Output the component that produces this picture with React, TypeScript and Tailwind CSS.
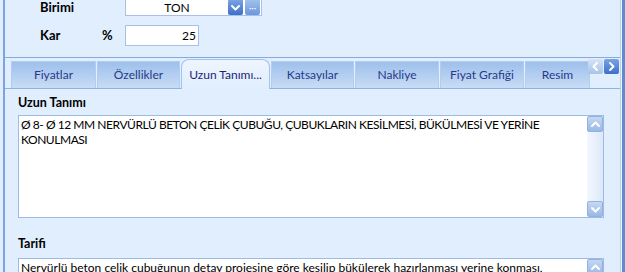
import React from 'react';

const tabs = [
  { label: 'Fiyatlar', w: 'w-[85px]' },
  { label: 'Özellikler', w: 'w-[83px]' },
  { label: 'Uzun Tanımı...', w: 'w-[89px]', active: true },
  { label: 'Katsayılar', w: 'w-[83px]' },
  { label: 'Nakliye', w: 'w-[84px]' },
  { label: 'Fiyat Grafiği', w: 'w-[84px]' },
  { label: 'Resim', w: 'w-[65px]' },
];

function Chevron({ dir, className }: { dir: 'up' | 'down' | 'left' | 'right'; className?: string }) {
  const d = {
    up: 'M2 7 L5.5 3.5 L9 7',
    down: 'M2 4 L5.5 7.5 L9 4',
    left: 'M7 2 L3.5 5.5 L7 9',
    right: 'M4 2 L7.5 5.5 L4 9',
  }[dir];
  return (
    <svg width="11" height="11" viewBox="0 0 11 11" className={className}>
      <path d={d} fill="none" stroke="currentColor" strokeWidth="2" strokeLinecap="round" strokeLinejoin="round" />
    </svg>
  );
}

function ScrollBar({ short }: { short?: boolean }) {
  return (
    <div className="w-[16px] h-full flex flex-col bg-gradient-to-r from-[#f4f8fe] to-[#dce8f8]">
      <div className="h-[16px] shrink-0 rounded-[2px] bg-gradient-to-b from-[#c6d8f3] to-[#9ab8e7] border border-[#93b1e0] flex items-center justify-center text-white">
        <Chevron dir="up" />
      </div>
      {!short && <div className="flex-1" />}
      {!short && (
        <div className="h-[16px] shrink-0 rounded-[2px] bg-gradient-to-b from-[#c6d8f3] to-[#9ab8e7] border border-[#93b1e0] flex items-center justify-center text-white">
          <Chevron dir="down" />
        </div>
      )}
    </div>
  );
}

export default function App() {
  return (
    <div className="w-[625px] h-[272px] overflow-hidden flex bg-[#e0eefd] font-['Lato',sans-serif] text-black">
      <div className="w-[3px] shrink-0 bg-[#e0eefd]" />
      <div className="w-[2px] shrink-0 bg-[#7fa3da]" />

      <div className="flex-1 flex flex-col min-w-0">
        {/* header fields */}
        <div className="h-[58px] shrink-0 border-b border-[#86aae0] pl-[35px] flex flex-col">
          <div className="flex items-center -mt-[3px] h-[19px]">
            <span className="w-[85px] text-[13px] leading-[13px] font-bold mt-[2px]">Birimi</span>
            <div className="w-[137px] h-[19px] bg-white border border-[#a6c0e6] flex items-center">
              <span className="flex-1 text-center text-[12px] leading-[12px] mt-[2px]">TON</span>
              <div className="w-[15px] h-[16px] mt-[1px] rounded-[2px] bg-gradient-to-b from-[#7da6e6] to-[#3e6ec8] flex items-center justify-center text-white">
                <Chevron dir="down" />
              </div>
              <div className="w-[15px] h-[16px] mt-[1px] ml-[2px] mr-[1px] rounded-[2px] bg-gradient-to-b from-[#a5c2ee] to-[#6c97dc] flex items-center justify-center text-white text-[9px] leading-none">
                ···
              </div>
            </div>
          </div>
          <div className="flex items-center mt-[9px] h-[21px]">
            <span className="w-[62px] text-[13px] font-bold">Kar</span>
            <span className="w-[23px] text-[13px] font-bold">%</span>
            <div className="w-[74px] h-[21px] bg-white border border-[#a6c0e6] flex items-center justify-end pr-[2px] text-[12px]">
              25
            </div>
          </div>
        </div>

        {/* tab strip */}
        <div className="h-[31px] shrink-0 border-b border-[#8fb2e6] flex items-end pl-[6px] gap-[1px] relative">
          {tabs.map((t) =>
            t.active ? (
              <div
                key={t.label}
                className={`${t.w} h-[30px] -mb-[1px] rounded-t-[8px] border border-b-0 border-[#a3c2ec] bg-gradient-to-b from-[#eef5fe] to-[#e0eefd] flex items-center justify-center text-[12px] text-[#221f7a]`}
              >
                {t.label}
              </div>
            ) : (
              <div
                key={t.label}
                className={`${t.w} h-[27px] border border-b-0 border-[#b3cdf0] bg-gradient-to-b from-[#9ec0ec] to-[#c8dcf5] flex items-center justify-center text-[12px] text-[#263a8a]`}
              >
                {t.label}
              </div>
            )
          )}
          <div className="absolute right-[1px] top-[1px] flex gap-[1px]">
            <div className="w-[15px] h-[15px] rounded-[2px] bg-gradient-to-b from-[#d5e3f6] to-[#a9c3ea] flex items-center justify-center text-white">
              <Chevron dir="left" />
            </div>
            <div className="w-[15px] h-[15px] rounded-[2px] bg-gradient-to-b from-[#7ba4e4] to-[#3f6ec6] flex items-center justify-center text-white">
              <Chevron dir="right" />
            </div>
          </div>
        </div>

        {/* content */}
        <div className="flex-1 pl-[13px] pr-[16px] pt-[6px] flex flex-col">
          <div className="h-[15px] shrink-0 text-[12.5px] font-bold leading-[15px]">Uzun Tanımı</div>
          <div className="mt-[5px] h-[103px] shrink-0 bg-white border border-[#9dbbe6] flex">
            <div className="flex-1 pl-[2px] pt-[1px] text-[12px] leading-[15px] tracking-[-0.45px]">
              Ø 8- Ø 12 MM NERVÜRLÜ BETON ÇELİK ÇUBUĞU, ÇUBUKLARIN KESİLMESİ, BÜKÜLMESİ VE YERİNE
              <br />
              KONULMASI
            </div>
            <ScrollBar />
          </div>
          <div className="mt-[18px] h-[15px] shrink-0 text-[12.5px] font-bold leading-[15px]">Tarifi</div>
          <div className="mt-[7px] h-[40px] shrink-0 bg-white border border-[#9dbbe6] flex">
            <div className="flex-1 pl-[2px] pt-[1px] text-[12px] leading-[15px]">
              Nervürlü beton çelik çubuğunun detay projesine göre kesilip bükülerek hazırlanması yerine konması,
            </div>
            <ScrollBar short />
          </div>
        </div>
      </div>

      <div className="w-[1px] shrink-0 bg-[#bccfe8]" />
      <div className="w-[1px] shrink-0 bg-[#eef4fc]" />
      <div className="w-[3px] shrink-0 bg-[#5f8ad2]" />
    </div>
  );
}
